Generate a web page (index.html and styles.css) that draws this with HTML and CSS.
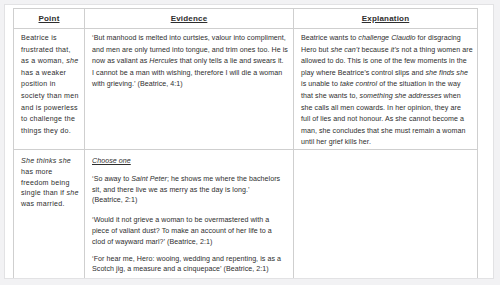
FILE: index.html
```html
<!DOCTYPE html>
<html>
<head>
<meta charset="utf-8">
<link rel="stylesheet" href="styles.css">
</head>
<body>
<div class="card">
  <table class="pee">
    <colgroup>
      <col class="c1"><col class="c2"><col class="c3">
    </colgroup>
    <thead>
      <tr>
        <th><span class="hd">Point</span></th>
        <th><span class="hd">Evidence</span></th>
        <th><span class="hd">Explanation</span></th>
      </tr>
    </thead>
    <tbody>
      <tr class="r1">
        <td class="pt">Beatrice is<br>frustrated that,<br>as a woman, <i>she</i><br>has a weaker<br>position in<br>society than men<br>and is powerless<br>to challenge the<br>things they do.</td>
        <td class="ev">‘But manhood is melted into curtsies, valour into compliment,<br>and men are only turned into tongue, and trim ones too. He is<br>now as valiant as <i>Hercules</i> that only tells a lie and swears it.<br>I cannot be a man with wishing, therefore I will die a woman<br>with grieving.’ (Beatrice, 4:1)</td>
        <td class="ex">Beatrice wants to <i>challenge Claudio</i> for disgracing<br>Hero but <i>she can’t</i> because <i>it’s</i> not a thing women are<br>allowed to do. This is one of the few moments in the<br>play where Beatrice’s control slips and <i>she finds she</i><br>is unable to <i>take control</i> of the situation in the way<br>that she wants to, <i>something she addresses</i> when<br>she calls all men cowards. In her opinion, they are<br>full of lies and not honour. As she cannot become a<br>man, she concludes that she must remain a woman<br>until her grief kills her.</td>
      </tr>
      <tr class="r2">
        <td class="pt"><i>She thinks she</i><br>has more<br>freedom being<br>single than if <i>she</i><br>was married.</td>
        <td class="ev">
          <p class="choose">Choose one</p>
          <p class="q1">‘So away to <i>Saint Peter</i>; he shows me where the bachelors<br>sit, and there live we as merry as the day is long.’<br>(Beatrice, 2:1)</p>
          <p class="q2">‘Would it not grieve a woman to be overmastered with a<br>piece of valiant dust? To make an account of her life to a<br>clod of wayward marl?’ (Beatrice, 2:1)</p>
          <p class="q3">‘For hear me, Hero: wooing, wedding and repenting, is as a<br>Scotch jig, a measure and a cinquepace’ (Beatrice, 2:1)</p>
        </td>
        <td class="ex"></td>
      </tr>
    </tbody>
  </table>
</div>
</body>
</html>
```
FILE: styles.css
```css
html, body {
  margin: 0;
  padding: 0;
}
body {
  background: #f2f2f4;
  width: 500px;
  height: 285px;
  overflow: hidden;
  padding: 4px 6px 0 4px;
  box-sizing: border-box;
}
.card {
  background: #ffffff;
  border: 1px solid #e2e2e4;
  width: 490px;
  height: 275px;
  box-sizing: border-box;
  padding: 3px 16px 0 8px;
  overflow: hidden;
}
.pee {
  border-collapse: collapse;
  table-layout: fixed;
  width: 464px;
  font-family: "Liberation Sans", Arial, sans-serif;
  font-size: 7.1px;
  letter-spacing: 0.05px;
  color: #2e2e2e;
}
.c1 { width: 71px; }
.c2 { width: 209px; }
.c3 { width: 184px; }
.pee th, .pee td {
  border: 1px solid #cfcfcf;
  vertical-align: top;
  text-align: left;
}
.pee th {
  height: 19px;
  padding: 0;
  text-align: center;
  vertical-align: middle;
  font-size: 8px;
  font-weight: bold;
  letter-spacing: 0.2px;
}
.hd {
  text-decoration: underline;
}
.pee td {
  padding: 4px 3px 0 7px;
  line-height: 11.6px;
  white-space: nowrap;
  overflow: hidden;
}
.pee td.pt { letter-spacing: 0.25px; }
.pee td.ex { padding-left: 7px; }
.r1 td {
  height: 120px;
  box-sizing: border-box;
}
.r2 td {
  height: 130px;
  box-sizing: border-box;
  line-height: 10.8px;
  padding-top: 6px;
  border-bottom: 2px solid #d6d6d6;
}
.r2 td p {
  margin: 0;
}
.r2 td p.choose {
  font-style: italic;
  text-decoration: underline;
  margin-bottom: 7px;
}
.r2 td p.q1 { margin-bottom: 9px; }
.r2 td p.q2 { margin-bottom: 6px; }
```
